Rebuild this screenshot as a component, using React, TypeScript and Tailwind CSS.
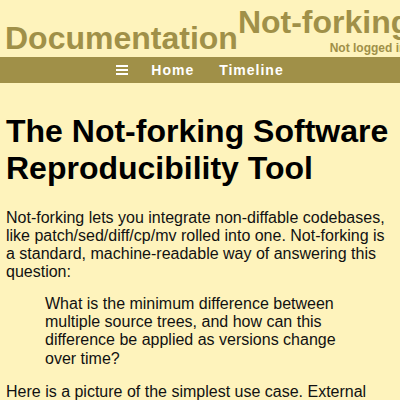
export default function App() {
  return (
    <div className="min-h-[400px] w-[400px] overflow-hidden bg-[#fef3bc] font-['Liberation_Sans',Arial,sans-serif] text-black">
      <div className="flex h-[57px] items-end overflow-hidden whitespace-nowrap pl-[5px]">
        <div className="shrink-0 text-[32px] font-bold leading-[36.8px] text-[#a09048]">
          Documentation
        </div>
        <div className="flex shrink-0 flex-col items-end pb-[1px]">
          <div className="text-[32px] font-bold leading-[36.8px] text-[#a09048]">
            Not-forking
          </div>
          <div className="mt-[1px] pr-[4px] text-[12px] font-bold leading-[13.8px] text-[#a09048]">
            Not logged in
          </div>
        </div>
      </div>

      <nav className="flex h-[26px] items-center justify-center gap-[23px] bg-[#a09048] text-[14px] font-bold tracking-[1px] text-white">
        <span className="flex w-[12px] flex-col gap-[2px]">
          <span className="h-[2px] bg-white" />
          <span className="h-[2px] bg-white" />
          <span className="h-[2px] bg-white" />
        </span>
        <span>Home</span>
        <span className="ml-[2px]">Timeline</span>
      </nav>

      <div className="px-[6px]">
        <h1 className="mt-[30px] text-[32px] font-bold leading-[36.8px]">
          The Not-forking Software Reproducibility Tool
        </h1>
        <p className="mt-[22px] text-[16px] leading-[18.3px] text-[#111]">
          Not-forking lets you integrate non-diffable codebases, like
          patch/sed/diff/cp/mv rolled into one. Not-forking is a standard,
          machine-readable way of answering this question:
        </p>
        <blockquote className="ml-[39px] mr-[40px] mt-[13px] text-[16px] leading-[18.3px] text-[#111]">
          What is the minimum difference between multiple source trees, and how
          can this difference be applied as versions change over time?
        </blockquote>
        <p className="mt-[15px] text-[16px] leading-[18.3px] text-[#111]">
          Here is a picture of the simplest use case. External source trees
          are combined into a single tree.
        </p>
      </div>
    </div>
  );
}
